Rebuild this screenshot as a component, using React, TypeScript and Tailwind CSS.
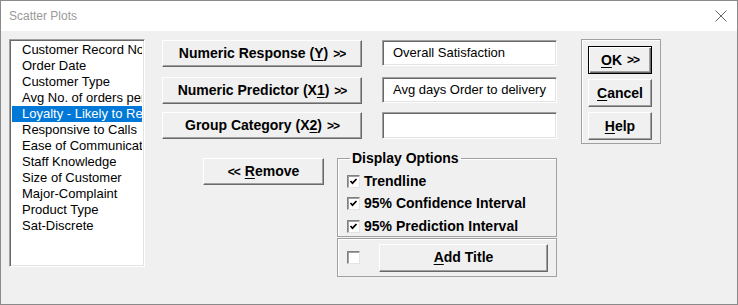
import React from 'react';

const items = [
  'Customer Record No',
  'Order Date',
  'Customer Type',
  'Avg No. of orders per month',
  'Loyalty - Likely to Recommend',
  'Responsive to Calls',
  'Ease of Communication',
  'Staff Knowledge',
  'Size of Customer',
  'Major-Complaint',
  'Product Type',
  'Sat-Discrete',
];

// raised 3D button, classic look
const btn =
  'flex items-center justify-center bg-[#f0f0f0] border border-t-white border-l-white border-r-[#696969] border-b-[#696969] shadow-[inset_-1px_-1px_0_#a0a0a0] font-bold text-[14px] text-black';

const sunken =
  'bg-white border border-t-[#a0a0a0] border-l-[#a0a0a0] border-r-white border-b-white shadow-[inset_1px_1px_0_#696969,inset_-1px_-1px_0_#e3e3e3]';

function U({ children }: { children: React.ReactNode }) {
  return <span className="underline underline-offset-2">{children}</span>;
}

function Arrows() {
  return <span className="text-[12px] ml-[5px] tracking-[-1px]">&gt;&gt;</span>;
}

function Check({ checked }: { checked?: boolean }) {
  return (
    <span className="w-[13px] h-[13px] bg-white border border-t-[#808080] border-l-[#808080] border-r-[#e3e3e3] border-b-[#e3e3e3] shadow-[inset_1px_1px_0_#a0a0a0] flex items-center justify-center shrink-0">
      {checked && (
        <svg width="9" height="9" viewBox="0 0 9 9">
          <path d="M1.5 4 L3.5 6.2 L7.5 2" fill="none" stroke="#000" strokeWidth="1.7" />
        </svg>
      )}
    </span>
  );
}

export default function App() {
  return (
    <div className="w-[738px] h-[305px] border border-[#8a8a8a] bg-[#f0f0f0] flex flex-col overflow-hidden font-['Liberation_Sans',Arial,sans-serif] text-[13px] text-black">
      {/* title bar */}
      <div className="h-[30px] bg-white flex items-center justify-between pl-[8px] pr-[10px] shrink-0">
        <span className="text-[12px] text-[#9a9a9a]">Scatter Plots</span>
        <svg width="12" height="12" viewBox="0 0 12 12">
          <path d="M0.5 0.5 L11.5 11.5 M11.5 0.5 L0.5 11.5" stroke="#666" strokeWidth="1" />
        </svg>
      </div>

      <div className="flex pt-[8px] pl-[8px]">
        {/* variable list */}
        <div className={`w-[136px] h-[228px] ${sunken} p-[2px] overflow-hidden`}>
          {items.map((it, i) => (
            <div
              key={it}
              className={`h-[16px] leading-[16px] pl-[10px] whitespace-nowrap overflow-hidden ${
                i === 4 ? 'bg-[#0078d7] text-white' : ''
              }`}
            >
              {it}
            </div>
          ))}
        </div>

        <div className="ml-[17px] flex flex-col">
          <div className="flex items-start">
            <div className="flex flex-col w-[200px] mt-[1px]">
              <button className={`${btn} h-[27px]`}>
                Numeric Response (<U>Y</U>)<Arrows />
              </button>
              <button className={`${btn} h-[27px] mt-[10px]`}>
                Numeric Predictor (X<U>1</U>)<Arrows />
              </button>
              <button className={`${btn} h-[27px] mt-[8px]`}>
                Group Category (X<U>2</U>)<Arrows />
              </button>
            </div>

            <div className="flex flex-col w-[175px] ml-[20px] mt-[1px]">
              <div className={`${sunken} h-[26px] pl-[10px] flex items-center`}>Overall Satisfaction</div>
              <div className={`${sunken} h-[26px] mt-[11px] pl-[10px] flex items-center whitespace-nowrap overflow-hidden`}>
                Avg days Order to delivery
              </div>
              <div className={`${sunken} h-[27px] mt-[9px]`} />
            </div>

            <div className="ml-[24px] w-[80px] h-[105px] border border-[#a0a0a0] shadow-[inset_1px_1px_0_#fff] pt-[6px] pl-[6px] flex flex-col gap-[5px]">
              <button className="w-[64px] h-[28px] flex items-center justify-center bg-[#f0f0f0] border border-black shadow-[inset_1px_1px_0_#fff,inset_-1px_-1px_0_#696969,inset_-2px_-2px_0_#a0a0a0] font-bold text-[14px]">
                <U>O</U>K<Arrows />
              </button>
              <button className={`${btn} w-[64px] h-[28px]`}>
                <U>C</U>ancel
              </button>
              <button className={`${btn} w-[64px] h-[28px]`}>
                <U>H</U>elp
              </button>
            </div>
          </div>

          <div className="flex items-start mt-[7px]">
            <button className={`${btn} w-[121px] h-[27px] ml-[41px] mt-[7px]`}>
              <span className="text-[12px] mr-[5px] tracking-[-1px]">&lt;&lt;</span>
              <U>R</U>emove
            </button>

            <div className="ml-[13px] flex flex-col w-[220px]">
              <fieldset className="border border-[#a0a0a0] shadow-[inset_1px_1px_0_#fff] h-[86px] pl-[9px]">
                <legend className="ml-[3px] px-[2px] font-bold text-[14px] leading-[15px]">Display Options</legend>
                <div className="flex flex-col font-bold text-[14px]">
                  <label className="h-[22px] flex items-center gap-[4px] mt-[4px]">
                    <Check checked />
                    Trendline
                  </label>
                  <label className="h-[23px] flex items-center gap-[4px]">
                    <Check checked />
                    95% Confidence Interval
                  </label>
                  <label className="h-[22px] flex items-center gap-[4px]">
                    <Check checked />
                    95% Prediction Interval
                  </label>
                </div>
              </fieldset>
              <div className="mt-[1px] h-[39px] border border-[#a0a0a0] shadow-[inset_1px_1px_0_#fff] flex items-center pl-[9px]">
                <Check />
                <button className={`${btn} w-[169px] h-[28px] ml-[19px]`}>
                  <U>A</U>dd Title
                </button>
              </div>
            </div>
          </div>
        </div>
      </div>
    </div>
  );
}
